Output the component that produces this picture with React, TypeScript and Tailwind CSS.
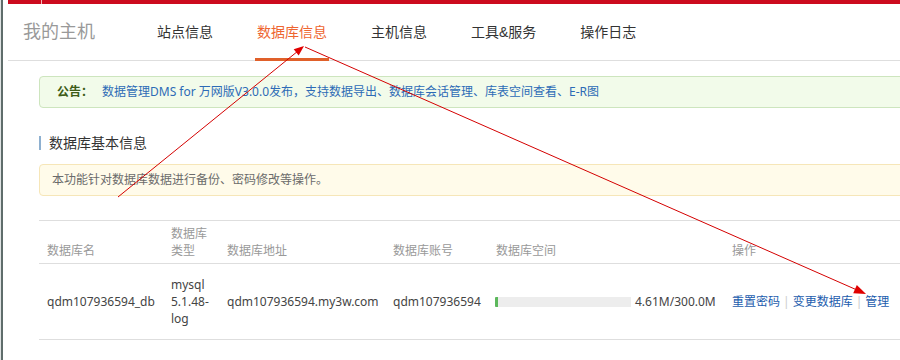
export default function App() {
  const nav = ["站点信息", "数据库信息", "主机信息", "工具&服务", "操作日志"];
  return (
    <div className="relative w-[900px] h-[360px] overflow-hidden bg-white flex font-['Noto_Sans','Noto_Sans_CJK_SC',sans-serif]">
      {/* left strip */}
      <div className="w-[8px] shrink-0 flex bg-white">
        <div className="w-[1px] bg-[#dfe3e3]" />
        <div className="w-[2px] bg-[#5f6d6b]" />
      </div>
      {/* main */}
      <div className="flex-1 flex flex-col min-w-0">
        <div className="h-[4px] bg-[#cc0a1e] flex">
          <div className="w-[33px]" />
          <div className="w-[1px] bg-[#f3b6b6]" />
        </div>
        <div className="h-[57px] border-b border-[#dedede] flex items-stretch font-['Liberation_Sans','Noto_Sans_CJK_SC',sans-serif]">
          <div className="pl-[15px] flex items-center text-[18px] leading-[24px] text-[#999999] w-[87px] whitespace-nowrap">
            我的主机
          </div>
          <div className="ml-[40px] flex items-stretch">
            {nav.map((n, i) => (
              <div
                key={n}
                className={
                  "relative mx-[20px] px-[2px] flex items-center text-[14px] leading-[20px] whitespace-nowrap " +
                  (i === 1 ? "text-[#ee6530]" : "text-[#333333]")
                }
              >
                {n}
                {i === 1 && (
                  <div className="absolute left-0 right-0 bottom-[-1px] h-[3px] bg-[#e0602a]" />
                )}
              </div>
            ))}
          </div>
        </div>
        {/* content */}
        <div className="w-[900px] shrink-0 pl-[31px] flex flex-col">
          <div className="mt-[15px] h-[32px] rounded-[4px] border border-[#cde5be] bg-[#f2fbea] flex items-center pl-[17px] text-[12px] leading-[16px] whitespace-nowrap">
            <span className="font-bold text-[#3d5c17] w-[45px]">公告：</span>
            <span className="text-[#2d6bb6]">
              数据管理DMS for 万网版V3.0.0发布，支持数据导出、数据库会话管理、库表空间查看、E-R图
            </span>
          </div>
          <div className="mt-[27px] h-[16px] flex items-center">
            <div className="w-[2px] h-[14px] bg-[#8eb0d0]" />
            <span className="ml-[8px] text-[14px] leading-[16px] text-[#333333]">数据库基本信息</span>
          </div>
          <div className="mt-[13px] h-[32px] rounded-[4px] border border-[#f6e6b8] bg-[#fffbea] flex items-center pl-[12px] text-[12px] leading-[16px] text-[#6b6b6b]">
            本功能针对数据库数据进行备份、密码修改等操作。
          </div>
          {/* table */}
          <div className="mt-[24px] border-t border-[#dedede] text-[12px] leading-[17px]">
            <div className="grid grid-cols-[124px_56px_166px_103px_236px_1fr] border-b border-[#dedede] text-[#999999]">
              {["数据库名", "数据库类型", "数据库地址", "数据库账号", "数据库空间", "操作"].map((h) => (
                <div key={h} className="px-[8px] pt-[4px] pb-[4px] flex items-end min-h-[42px]">
                  <span>{h}</span>
                </div>
              ))}
            </div>
            <div className="grid grid-cols-[124px_56px_166px_103px_236px_1fr] border-b border-[#dedede] text-[#444444] h-[76px]">
              <div className="px-[8px] flex items-center whitespace-nowrap">qdm107936594_db</div>
              <div className="px-[8px] flex items-center">
                <span>
                  mysql
                  <br />
                  5.1.48-
                  <br />
                  log
                </span>
              </div>
              <div className="px-[8px] flex items-center whitespace-nowrap">qdm107936594.my3w.com</div>
              <div className="px-[8px] flex items-center whitespace-nowrap">qdm107936594</div>
              <div className="pl-[7px] flex items-center whitespace-nowrap">
                <div className="w-[136px] h-[10px] bg-[#ededed] flex">
                  <div className="w-[3px] h-full bg-[#5cb85c] rounded-l-[1px]" />
                </div>
                <span className="ml-[4px]">4.61M/300.0M</span>
              </div>
              <div className="px-[8px] flex items-center whitespace-nowrap text-[#1c5cad]">
                <span>重置密码</span>
                <span className="mx-[3px] text-[#cccccc]">|</span>
                <span>变更数据库</span>
                <span className="mx-[3px] text-[#cccccc]">|</span>
                <span>管理</span>
              </div>
            </div>
          </div>
        </div>
      </div>
      {/* annotation arrows */}
      <svg className="absolute inset-0 pointer-events-none" width="900" height="360" viewBox="0 0 900 360">
        <line x1="118" y1="197" x2="298" y2="51" stroke="#d40000" strokeWidth="1" />
        <polygon points="304,46 298.7,55.4 293.7,49.2" fill="#e00000" />
        <line x1="305" y1="47" x2="857" y2="290" stroke="#d40000" strokeWidth="1" />
        <polygon points="866,294 853.2,293.2 856.8,285" fill="#e00000" />
      </svg>
    </div>
  );
}
